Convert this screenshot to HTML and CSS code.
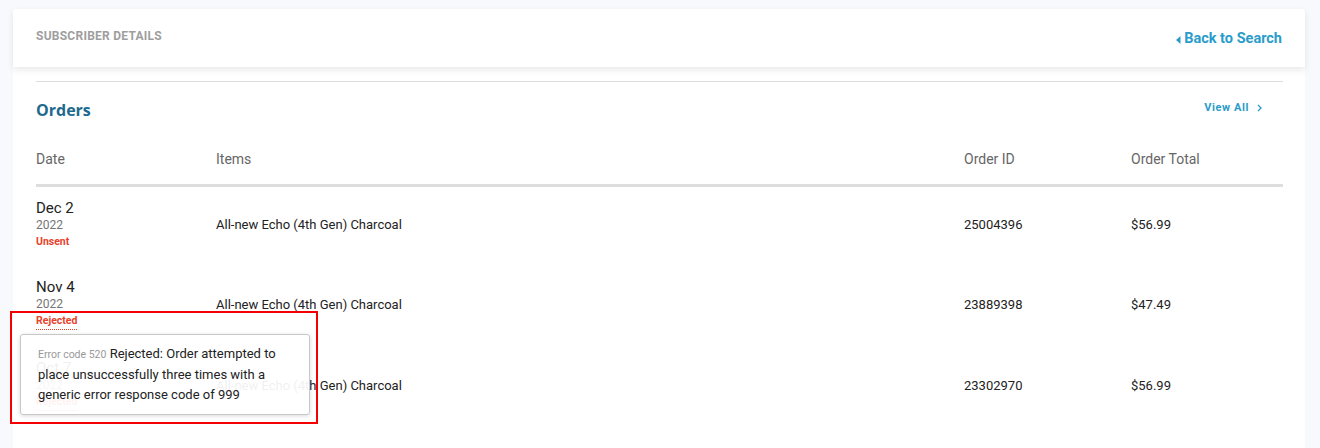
FILE: index.html
```html
<!DOCTYPE html>
<html lang="en">
<head>
<meta charset="utf-8">
<title>Subscriber Details</title>
<link rel="stylesheet" href="styles.css">
</head>
<body>
<div class="page">
  <header class="top-card">
    <div class="top-title">SUBSCRIBER DETAILS</div>
    <a class="back-link" href="#">
      <svg class="caret" width="5" height="8" viewBox="0 0 5 8"><path d="M4.5 0 L0 4 L4.5 8 Z" fill="currentColor"/></svg>
      Back to Search
    </a>
  </header>
  <main class="main-card">
    <div class="divider"></div>
    <div class="section-head">
      <h2 class="section-title">Orders</h2>
      <a class="view-all" href="#">View All
        <svg class="chev" width="5" height="8" viewBox="0 0 5 8"><path d="M1 1 L4 4 L1 7" fill="none" stroke="currentColor" stroke-width="1.3"/></svg>
      </a>
    </div>
    <table class="orders">
      <colgroup>
        <col class="c-date"><col class="c-items"><col class="c-id"><col class="c-total">
      </colgroup>
      <thead>
        <tr><th>Date</th><th>Items</th><th>Order ID</th><th>Order Total</th></tr>
      </thead>
      <tbody>
        <tr>
          <td class="date-cell">
            <div class="d-main">Dec 2</div>
            <div class="d-year">2022</div>
            <div class="status">Unsent</div>
          </td>
          <td>All-new Echo (4th Gen) Charcoal</td>
          <td>25004396</td>
          <td>$56.99</td>
        </tr>
        <tr>
          <td class="date-cell">
            <div class="d-main">Nov 4</div>
            <div class="d-year">2022</div>
            <div class="status-wrap">
              <span class="status dotted">Rejected</span>
              <div class="tooltip"><span class="err-code">Error code 520</span> Rejected: Order attempted to place unsuccessfully three times with a generic error response code of 999</div>
            </div>
          </td>
          <td>All-new Echo (4th Gen) Charcoal</td>
          <td>23889398</td>
          <td>$47.49</td>
        </tr>
        <tr>
          <td class="date-cell">
            <div class="d-main">Oct 7</div>
            <div class="d-year">2022</div>
            <div class="status-wrap"><span class="status dotted">Rejected</span></div>
          </td>
          <td>All-new Echo (4th Gen) Charcoal</td>
          <td>23302970</td>
          <td>$56.99</td>
        </tr>
      </tbody>
    </table>
  </main>
</div>
<div class="highlight"></div>
</body>
</html>
```
FILE: styles.css
```css
* { box-sizing: border-box; }
html, body { margin: 0; padding: 0; }
body {
  background: #f8f9fc;
  font-family: Roboto, "Liberation Sans", Arial, sans-serif;
  color: #222;
  width: 1320px;
  height: 448px;
  overflow: hidden;
  position: relative;
}
.page {
  padding: 9px 15px 0 13px;
}
.top-card {
  position: relative;
  z-index: 2;
  background: #fff;
  height: 58px;
  padding: 20px 23px 0 23px;
  display: flex;
  justify-content: space-between;
  align-items: flex-start;
  border-radius: 3px 3px 0 0;
  box-shadow: 0 3px 7px rgba(0, 0, 0, 0.09);
}
.top-title {
  font-size: 12px;
  line-height: 14px;
  font-weight: 700;
  letter-spacing: 0.25px;
  color: #9e9e9e;
}
.back-link {
  margin-top: 2px;
  display: flex;
  align-items: center;
  gap: 3px;
  font-size: 14.5px;
  line-height: 16px;
  font-weight: 700;
  color: #2a9ccb;
  text-decoration: none;
}
.caret { margin-top: 1px; }
.main-card {
  position: relative;
  z-index: 1;
  background: #fff;
  padding: 14px 22px 40px 23px;
  min-height: 400px;
}
.divider {
  height: 1px;
  background: #dcdcdc;
}
.section-head {
  display: flex;
  justify-content: space-between;
  align-items: flex-start;
  padding-top: 18px;
  padding-right: 21px;
}
.section-title {
  margin: 0;
  font-family: "Open Sans", Lato, sans-serif;
  font-size: 16px;
  line-height: 20px;
  font-weight: 700;
  color: #1d6a8e;
}
.view-all {
  margin-top: 1px;
  display: flex;
  align-items: center;
  gap: 8px;
  font-size: 11px;
  line-height: 14px;
  font-weight: 700;
  letter-spacing: 0.6px;
  color: #2a9ccb;
  text-decoration: none;
}
.orders {
  width: 100%;
  border-collapse: collapse;
  table-layout: fixed;
}
.c-date { width: 180px; }
.c-items { width: 748px; }
.c-id { width: 167px; }
.c-total { width: auto; }
.orders th {
  text-align: left;
  font-weight: 400;
  font-size: 14px;
  line-height: 20px;
  color: #666;
  padding: 29px 0 15px 0;
  border-bottom: 3px solid #dedede;
}
.orders td {
  font-size: 13px;
  line-height: 16px;
  color: #222;
  vertical-align: middle;
  padding: 13px 0 16px 0;
}
.orders td.date-cell {
  vertical-align: top;
  padding: 12px 0 17px 0;
}
.d-main {
  font-size: 15px;
  line-height: 19px;
  color: #222;
}
.d-year {
  font-size: 12px;
  line-height: 14px;
  color: #757575;
}
.status {
  display: inline-block;
  margin-top: 3px;
  font-size: 10.5px;
  line-height: 14px;
  font-weight: 700;
  color: #e8422b;
}
.status-wrap { position: relative; }
.dotted {
  border-bottom: 1px dotted #e8422b;
  padding-bottom: 1px;
}
.tooltip {
  position: absolute;
  z-index: 5;
  left: -16px;
  top: 23px;
  width: 290px;
  padding: 9px 16px 9px 17px;
  background: rgba(255, 255, 255, 0.93);
  border: 1px solid #c8c8c8;
  border-radius: 3px;
  box-shadow: 0 1px 4px rgba(0, 0, 0, 0.15);
  font-size: 13px;
  line-height: 20px;
  color: #222;
}
.err-code {
  font-size: 10.5px;
  color: #999;
}
.highlight {
  position: absolute;
  z-index: 10;
  left: 10px;
  top: 311px;
  width: 308px;
  height: 113px;
  border: 2px solid #f40000;
  pointer-events: none;
}
```
